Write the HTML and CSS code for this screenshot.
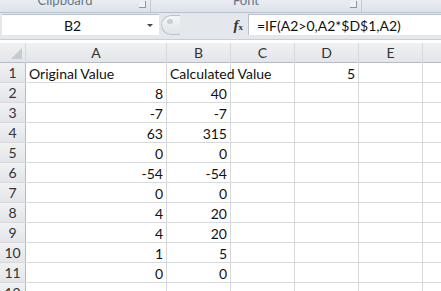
FILE: index.html
```html
<!DOCTYPE html>
<html lang="en">
<head>
<meta charset="UTF-8">
<meta name="viewport" content="width=device-width, initial-scale=1.0">
<title>Book1 - Excel</title>
<link rel="stylesheet" href="styles.css">
</head>
<body>

<div class="ribbon">
  <div class="group group-clip">
    <span class="group-label">Clipboard</span>
    <span class="launcher"></span>
  </div>
  <div class="group group-font">
    <span class="group-label">Font</span>
    <span class="launcher"></span>
  </div>
  <div class="group group-rest"></div>
</div>

<div class="formula-bar">
  <div class="name-box">
    <span class="name-text">B2</span>
    <span class="name-arrow"></span>
  </div>
  <div class="grip"><span class="grip-dot"></span></div>
  <div class="fx"><i>f</i><sub>x</sub></div>
  <div class="formula">=IF(A2&gt;0,A2*$D$1,A2)</div>
</div>

<div class="sheet" id="sheet">
  <div class="hd corner"><span class="corner-tri"></span></div>
  <div class="hd">A</div>
  <div class="hd">B</div>
  <div class="hd">C</div>
  <div class="hd">D</div>
  <div class="hd">E</div>
  <div class="hd"></div>
</div>

<script>
  // rows: original value, calculated value
  const rows = [
    ['Original Value', 'Calculated Value', '', '5'],
    [8, 40], [-7, -7], [63, 315], [0, 0], [-54, -54],
    [0, 0], [4, 20], [4, 20], [1, 5], [0, 0], []
  ];

  const sheet = document.getElementById('sheet');

  rows.forEach((row, i) => {
    const num = document.createElement('div');
    num.className = 'hd row-num';
    num.textContent = i + 1;
    sheet.appendChild(num);

    for (let c = 0; c < 6; c++) {
      const cell = document.createElement('div');
      const val = row[c];
      cell.className = 'cell';
      if (val !== undefined && val !== '') {
        cell.textContent = val;
        if (typeof val === 'number' || !isNaN(Number(val))) {
          cell.classList.add('num');
        } else {
          cell.classList.add('txt');
        }
      }
      sheet.appendChild(cell);
    }
  });
</script>

</body>
</html>
```

FILE: styles.css
```css
body {
  margin: 0;
  width: 441px;
  height: 291px;
  overflow: hidden;
  background: #fff;
  font-family: Lato, "Open Sans", sans-serif;
}

.ribbon {
  display: flex;
  height: 12px;
  overflow: hidden;
  background: linear-gradient(#e9edf2, #dde3ea);
  border-bottom: 1px solid #b9c2cc;
}

.group {
  position: relative;
  display: flex;
  justify-content: center;
  padding-right: 20px;
  border-right: 1px solid #c3cad3;
}

.group-clip {
  width: 130px;
}

.group-font {
  width: 190px;
}

.group-rest {
  flex: 1;
  padding-right: 0;
  border-right: none;
}

.group-label {
  font-size: 13px;
  line-height: 13px;
  margin-top: -6px;
  color: #667587;
}

.launcher {
  position: absolute;
  right: 4px;
  top: 1px;
  width: 6px;
  height: 6px;
  border-right: 1px solid #8a96a4;
  border-bottom: 1px solid #8a96a4;
  background: #eef1f5;
}

.formula-bar {
  display: flex;
  align-items: stretch;
  height: 21px;
  padding: 1px 0 4px 2px;
  background: #e4e8ed;
  border-bottom: 1px solid #c9ced5;
  font-size: 14px;
  color: #111;
}

.name-box {
  position: relative;
  display: flex;
  align-items: center;
  width: 157px;
  background: #fff;
  border-top: 1px solid #b8c0ca;
}

.name-text {
  flex: 1;
  text-align: center;
  padding-right: 16px;
}

.name-arrow {
  position: absolute;
  right: 6px;
  top: 9px;
  width: 0;
  height: 0;
  border-left: 3px solid transparent;
  border-right: 3px solid transparent;
  border-top: 3px solid #444;
}

.grip {
  position: relative;
  width: 18px;
  margin: 1px 0 0 2px;
  background: linear-gradient(#f4f5f7, #e1e4e8);
  border: 1px solid #bcc3cc;
  border-right: none;
  border-radius: 11px 0 0 11px;
}

.grip-dot {
  position: absolute;
  left: 5px;
  top: 3px;
  width: 6px;
  height: 5px;
  border-radius: 50%;
  background: #c8cdd3;
}

.fx {
  width: 63px;
  text-align: right;
  padding-right: 5px;
  font-family: "Liberation Serif", serif;
  font-weight: bold;
  font-size: 15px;
  line-height: 22px;
  color: #333;
}

.fx sub {
  font-size: 9px;
  vertical-align: 0;
}

.formula {
  flex: 1;
  display: flex;
  align-items: center;
  padding-left: 8px;
  background: #fff;
  border-left: 1px solid #b8c0ca;
  border-top: 1px solid #b8c0ca;
}

.sheet {
  display: grid;
  grid-template-columns: 25px 140px 63px 63px 63px 63px 1fr;
  grid-auto-rows: 19px;
  gap: 1px;
  margin-top: 3px;
  background: #d8d9db;
  font-size: 14px;
  color: #111;
}

.hd {
  display: flex;
  align-items: center;
  justify-content: center;
  background: linear-gradient(#f0f1f3, #e3e5e8);
  color: #333;
}

.sheet > .hd:nth-child(-n+7) {
  box-shadow: 0 1px 0 #b6bcc4;
}

.row-num {
  box-shadow: 1px 0 0 #b6bcc4;
}

.corner {
  position: relative;
}

.corner-tri {
  position: absolute;
  right: 3px;
  bottom: 3px;
  width: 0;
  height: 0;
  border-left: 11px solid transparent;
  border-bottom: 11px solid #c6cbd1;
}

.cell {
  display: flex;
  align-items: flex-end;
  padding: 0 3px 0 3px;
  background: #fff;
  line-height: 17px;
  white-space: nowrap;
  overflow: visible;
}

.num {
  justify-content: flex-end;
}

.txt {
  position: relative;
  z-index: 1;
  background: #fff;
}
```
